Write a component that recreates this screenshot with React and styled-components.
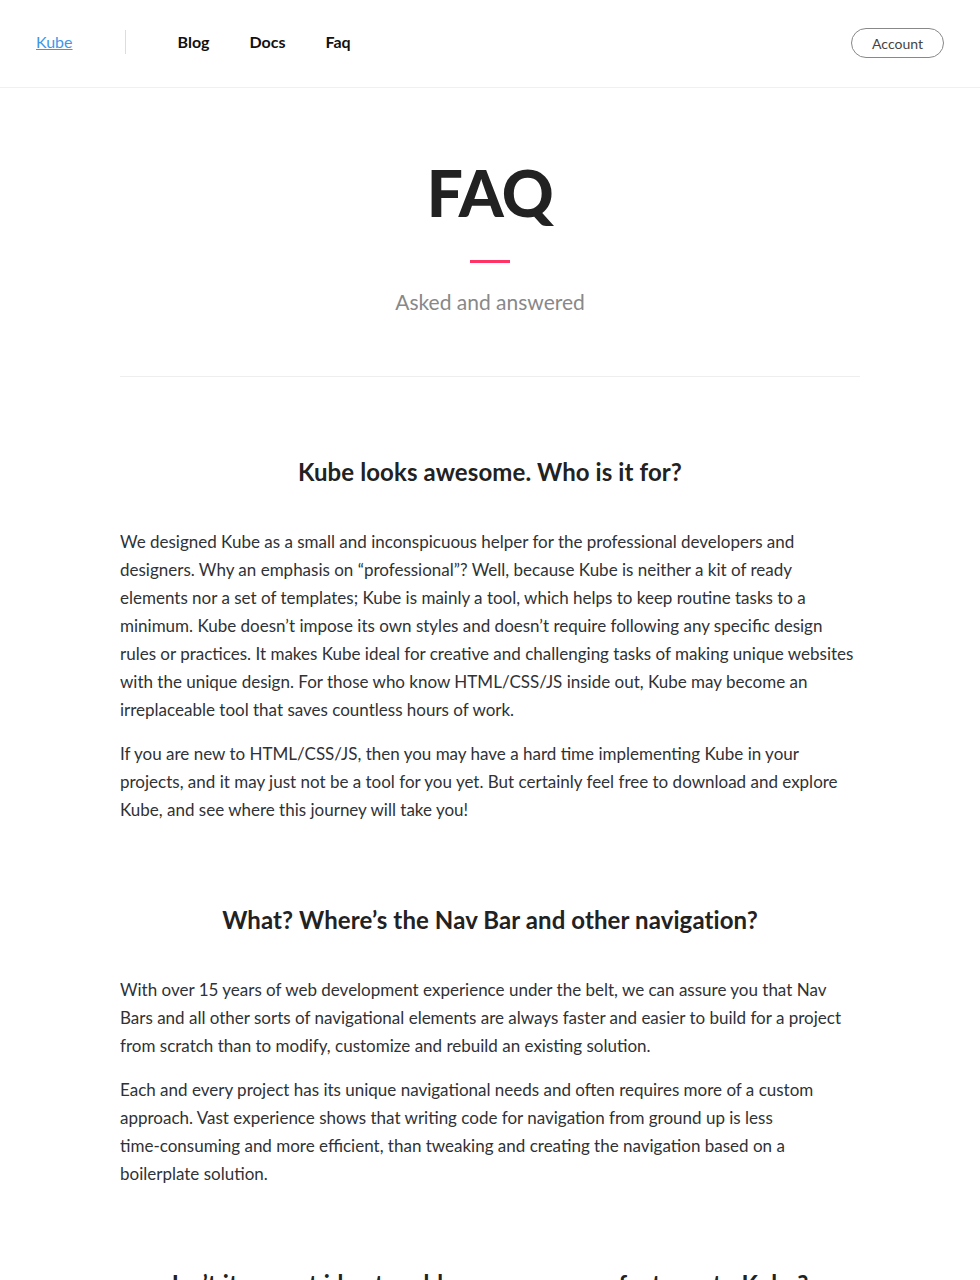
import React from 'react'
import styled, { createGlobalStyle } from 'styled-components'

const GlobalStyle = createGlobalStyle`
  body {
    margin: 0;
    background: #fff;
    font-family: Lato, "Open Sans", sans-serif;
    color: #313439;
    -webkit-font-smoothing: antialiased;
  }
  * { box-sizing: border-box; }
`

const NoWrap = styled.span`
white-space: nowrap;
`

const faqs = [
    {
        q: 'Kube looks awesome. Who is it for?',
        a: [
            'We designed Kube as a small and inconspicuous helper for the professional developers and designers. Why an emphasis on \u201cprofessional\u201d? Well, because Kube is neither a kit of ready elements nor a set of templates; Kube is mainly a tool, which helps to keep routine tasks to a minimum. Kube doesn\u2019t impose its own styles and doesn\u2019t require following any specific design rules or practices. It makes Kube ideal for creative and challenging tasks of making unique websites with the unique design. For those who know HTML/CSS/JS inside out, Kube may become an irreplaceable tool that saves countless hours of work.',
            'If you are new to HTML/CSS/JS, then you may have a hard time implementing Kube in your projects, and it may just not be a tool for you yet. But certainly feel free to download and explore Kube, and see where this journey will take you!'
        ]
    },
    {
        q: 'What? Where\u2019s the Nav Bar and other navigation?',
        a: [
            'With over 15 years of web development experience under the belt, we can assure you that Nav Bars and all other sorts of navigational elements are always faster and easier to build for a project from scratch than to modify, customize and rebuild an existing solution.',
            <>Each and every project has its unique navigational needs and often requires more of a custom approach. Vast experience shows that writing code for navigation from ground up is less <NoWrap>time-consuming</NoWrap> and more efficient, than tweaking and creating the navigation based on a boilerplate solution.</>
        ]
    },
    {
        q: 'Isn\u2019t it a great idea to add more awesome features to Kube?',
        a: [
            'We believe that a framework should stay small and focused. Every new feature adds weight, complexity and things to learn, so we keep Kube lean and let you build exactly what your project needs.'
        ]
    }
]

function App() {
    return (
        <>
            <GlobalStyle />
            <Header>
                <Brand href="#">Kube</Brand>
                <Divider />
                <Nav>
                    <NavLink href="#">Blog</NavLink>
                    <NavLink href="#">Docs</NavLink>
                    <NavLink href="#">Faq</NavLink>
                </Nav>
                <AccountButton>Account</AccountButton>
            </Header>
            <Hero>
                <Title>FAQ</Title>
                <Accent />
                <Subtitle>Asked and answered</Subtitle>
            </Hero>
            <Content>
                <Rule />
                {faqs.map(item => (
                    <Question key={item.q}>
                        <QuestionTitle>{item.q}</QuestionTitle>
                        {item.a.map((p, i) => (
                            <Para key={i}>{p}</Para>
                        ))}
                    </Question>
                ))}
            </Content>
        </>
    )
}

export default App

const Header = styled.header`
display: flex;
align-items: center;
height: 88px;
padding: 0 36px 4px;
border-bottom: 1px solid #f0f0f0;
`
const Brand = styled.a`
font-size: 16px;
color: #3f96e8;
text-decoration: underline;
`
const Divider = styled.span`
width: 1px;
height: 24px;
background: #dddddd;
margin: 0 52px;
`
const Nav = styled.nav`
display: flex;
gap: 40px;
flex: 1;
`
const NavLink = styled.a`
font-size: 16px;
font-weight: 700;
color: #111;
text-decoration: none;
`
const AccountButton = styled.button`
width: 93px;
height: 30px;
margin-top: 3px;
border: 1px solid #888;
border-radius: 15px;
background: #fff;
font-family: Lato, sans-serif;
font-size: 14px;
color: #444;
padding: 0;
`
const Hero = styled.section`
display: flex;
flex-direction: column;
align-items: center;
padding: 70px 0 59px;
`
const Title = styled.h1`
margin: 0;
font-size: 64px;
line-height: 70px;
font-weight: 900;
color: #222;
letter-spacing: -0.4px;
`
const Accent = styled.div`
width: 40px;
height: 3px;
background: #ff3366;
margin-top: 32px;
`
const Subtitle = styled.p`
margin: 24px 0 0;
font-size: 21px;
line-height: 30px;
color: #888;
`
const Content = styled.main`
width: 740px;
margin: 0 auto;
`
const Rule = styled.hr`
margin: 0;
border: 0;
border-top: 1px solid #eeeeee;
`
const Question = styled.section`
padding-top: 79px;
& + & {
    padding-top: 80px;
}
`
const QuestionTitle = styled.h2`
margin: 0 0 41px;
text-align: center;
font-size: 24px;
line-height: 31px;
font-weight: 700;
color: #222;
letter-spacing: 0.1px;
`
const Para = styled.p`
margin: 0 0 16px;
font-size: 17px;
line-height: 28px;
color: #2f3236;
&:last-child {
    margin-bottom: 0;
}
`
